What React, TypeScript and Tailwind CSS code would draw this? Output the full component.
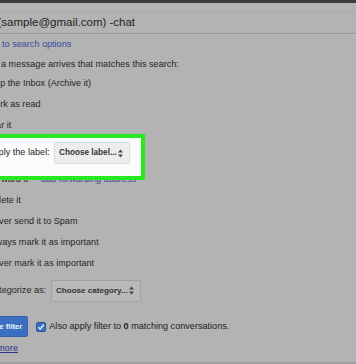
import React from "react";

function Arrows() {
  return (
    <svg width="5" height="9" viewBox="0 0 5 9" className="shrink-0">
      <path d="M0 3.6 L2.5 0.4 L5 3.6Z M0 5.4 L2.5 8.6 L5 5.4Z" fill="#444" />
    </svg>
  );
}

function Row({ children, h = "h-[21px]" }: { children: React.ReactNode; h?: string }) {
  return <div className={`${h} shrink-0 flex items-center whitespace-nowrap`}>{children}</div>;
}

export default function App() {
  return (
    <div className="w-[356px] h-[364px] overflow-hidden bg-[#b3b3b3] flex flex-col text-[#272727] font-['Liberation_Sans',Arial,sans-serif] text-[9.1px]">
      <div className="h-[3px] shrink-0 bg-[#3c3c3c]" />
      <div className="h-[9px] shrink-0" />
      <div className="h-[22px] shrink-0 border-t border-t-[#a9a9a9] border-b border-b-[#979797] flex items-center ml-[-40px] pl-[11.3px]">
        <span className="text-[11.5px] whitespace-nowrap text-[#222]">from:(sample@gmail.com) -chat</span>
      </div>
      <div className="h-[1px] shrink-0 bg-[#bababa]" />
      <div className="h-[20.6px] shrink-0 flex items-center ml-[-28.3px] whitespace-nowrap text-[#3a4a9e]">
        « Back to search options
      </div>
      <div className="h-[18px] shrink-0 flex items-center ml-[-25.3px] whitespace-nowrap">
        When a message arrives that matches this search:
      </div>
      <div className="flex flex-col ml-[-12.5px]">
        <Row>Skip the Inbox (Archive it)</Row>
        <Row>Mark as read</Row>
        <Row>Star it</Row>
        <div className="h-[33px] shrink-0 relative flex items-center whitespace-nowrap">
          <div className="absolute z-10 left-[-30px] w-[187.5px] top-[-2.6px] bottom-[-10.4px] border-[4.5px] border-[#27e821] bg-[#fbfbfb]" />
          <div className="relative z-20 flex items-center">
            <span>Apply the label:</span>
            <div className="ml-[4.3px] w-[76px] h-[22px] rounded-[2px] border border-[#dedede] bg-[#ededed] flex items-center justify-between pl-[4px] pr-[6px]">
              <span className="font-bold text-[8.2px] text-[#333]">Choose label...</span>
              <Arrows />
            </div>
          </div>
        </div>
        <Row>
          <span>Forward it</span>
          <span className="ml-[13px] text-[#34479a]">add forwarding address</span>
        </Row>
        <Row>Delete it</Row>
        <Row>Never send it to Spam</Row>
        <Row>Always mark it as important</Row>
        <Row>Never mark it as important</Row>
        <Row h="h-[32px]">
          <span>Categorize as:</span>
          <div className="ml-[4.8px] w-[90px] h-[22px] rounded-[2px] border border-[#a3a3a3] bg-[#b9b9b9] flex items-center justify-between pl-[4px] pr-[6px]">
            <span className="font-bold text-[8.1px] text-[#333]">Choose category...</span>
            <Arrows />
          </div>
        </Row>
      </div>
      <div className="mt-[9.4px] h-[22px] shrink-0 flex items-center ml-[-26px] whitespace-nowrap">
        <div className="w-[54px] h-[21px] rounded-[2px] bg-[#3a6fc1] border border-[#3363ad] flex items-center justify-center text-[7.7px] font-bold text-[#eef2f8]">
          Create filter
        </div>
        <div className="ml-[8px] w-[10px] h-[10px] rounded-[2px] bg-[#3b70c4] border border-[#2c5594] flex items-center justify-center">
          <svg width="8" height="8" viewBox="0 0 8 8">
            <path d="M1.3 4.2 L3.2 6 L6.8 1.8" stroke="#f2f2f2" strokeWidth="1.4" fill="none" />
          </svg>
        </div>
        <span className="ml-[3.3px] text-[#222]">
          Also apply filter to <b>0</b> matching conversations.
        </span>
      </div>
      <div className="h-[21.4px] shrink-0 flex items-center ml-[-28.5px] whitespace-nowrap">
        <span className="text-[#2e2e8e] underline">Learn more</span>
      </div>
      <div className="flex-1" />
      <div className="h-[2px] shrink-0 bg-[#9d9d9d]" />
    </div>
  );
}
